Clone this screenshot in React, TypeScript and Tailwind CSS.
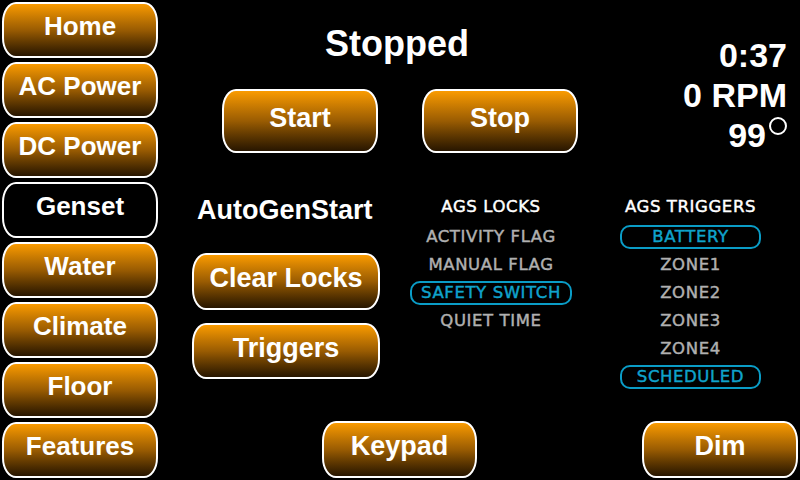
import React from 'react';

const navItems = ['Home', 'AC Power', 'DC Power', 'Genset', 'Water', 'Climate', 'Floor', 'Features'];
const locks = [
  { label: 'ACTIVITY FLAG', active: false },
  { label: 'MANUAL FLAG', active: false },
  { label: 'SAFETY SWITCH', active: true },
  { label: 'QUIET TIME', active: false },
];
const triggers = [
  { label: 'BATTERY', active: true },
  { label: 'ZONE1', active: false },
  { label: 'ZONE2', active: false },
  { label: 'ZONE3', active: false },
  { label: 'ZONE4', active: false },
  { label: 'SCHEDULED', active: true },
];

const pill =
  'flex items-center justify-center border-2 border-white rounded-[14px/20px] font-bold text-white';
const orange = 'bg-gradient-to-b from-[#fa9b00] via-[#9a5c02] to-[#281600]';
const flagText =
  "font-['DejaVu_Sans',sans-serif] text-[16.5px] tracking-[0.6px] [-webkit-text-stroke:0.45px_currentColor]";

function PillButton({ label, className = '' }: { label: string; className?: string }) {
  return <button className={`${pill} ${orange} text-[27px] pb-[6px] ${className}`}>{label}</button>;
}

function FlagRow({ label, active }: { label: string; active: boolean }) {
  return (
    <div className="h-[28px] flex items-center justify-center">
      {active ? (
        <div className="w-full h-[24px] flex items-center justify-center border-2 border-[#0a9cc6] rounded-[10px] text-[#0fa3cc]">
          {label}
        </div>
      ) : (
        <span className="text-[#b0b0b0]">{label}</span>
      )}
    </div>
  );
}

export default function App() {
  return (
    <div className="w-[800px] h-[480px] bg-black flex text-white font-['Liberation_Sans',Arial,sans-serif] overflow-hidden">
      {/* Side navigation */}
      <nav className="w-[160px] flex flex-col gap-1 pt-0.5 pl-0.5">
        {navItems.map((item) => (
          <button
            key={item}
            className={`${pill} w-[156px] h-[56px] text-[26px] pb-[8px] ${
              item === 'Genset' ? 'bg-black' : orange
            }`}
          >
            {item}
          </button>
        ))}
      </nav>

      <main className="flex-1 flex flex-col">
        {/* Status header */}
        <div className="h-[190px] flex">
          <div className="w-[480px] flex flex-col items-center pt-[24px]">
            <h1 className="text-[36px] leading-[40px] font-bold pr-[6px]">Stopped</h1>
            <div className="flex gap-[44px] mt-[25px]">
              <PillButton label="Start" className="w-[156px] h-[64px]" />
              <PillButton label="Stop" className="w-[156px] h-[64px]" />
            </div>
          </div>
          <div className="flex-1 flex flex-col items-end pt-[35px] pr-[13px] text-[34px] leading-[40px] font-bold">
            <div>0:37</div>
            <div>0 RPM</div>
            <div className="flex items-start">
              <span>99</span>
              <span className="w-[18px] h-[18px] mt-[2px] ml-[3px] rounded-full border-2 border-white" />
            </div>
          </div>
        </div>

        {/* AutoGenStart panel */}
        <div className="flex">
          <div className="w-[188px] ml-[32px] flex flex-col">
            <div className="text-[27px] leading-[30px] font-bold pl-[5px] mt-[5px]">AutoGenStart</div>
            <PillButton label="Clear Locks" className="w-[188px] h-[57px] mt-[28px]" />
            <PillButton label="Triggers" className="w-[188px] h-[56px] mt-[13px]" />
          </div>

          <div className={`w-[162px] ml-[30px] pt-[3px] ${flagText}`}>
            <div className="h-[28px] flex items-center justify-center text-white">AGS LOCKS</div>
            <div className="mt-[2px]">
              {locks.map((l) => (
                <FlagRow key={l.label} {...l} />
              ))}
            </div>
          </div>

          <div className={`w-[141px] ml-[48px] pt-[3px] ${flagText}`}>
            <div className="h-[28px] flex items-center justify-center text-white">AGS TRIGGERS</div>
            <div className="mt-[2px]">
              {triggers.map((t) => (
                <FlagRow key={t.label} {...t} />
              ))}
            </div>
          </div>
        </div>

        {/* Bottom actions */}
        <div className="mt-auto mb-[2px] flex">
          <PillButton label="Keypad" className="w-[155px] h-[57px] ml-[162px]" />
          <PillButton label="Dim" className="w-[156px] h-[57px] ml-auto mr-[2px]" />
        </div>
      </main>
    </div>
  );
}
